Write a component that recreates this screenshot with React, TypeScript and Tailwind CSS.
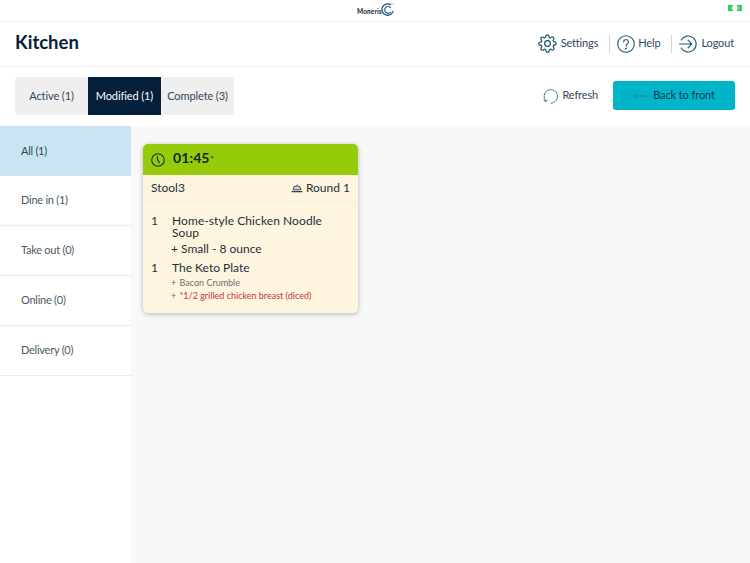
import React from "react";

const teal = "#1d5a73";

function Gear() {
  return (
    <svg width="19" height="19" viewBox="0 0 24 24" fill="none" stroke={teal} strokeWidth="1.6" strokeLinejoin="round" strokeLinecap="round">
      <circle cx="12" cy="12" r="3.6" />
      <path d="M19.4 15a1.65 1.65 0 0 0 .33 1.82l.06.06a2 2 0 1 1-2.83 2.83l-.06-.06a1.65 1.65 0 0 0-2.8 1.17V21a2 2 0 1 1-4 0v-.09a1.65 1.65 0 0 0-2.9-1.08l-.06.06a2 2 0 1 1-2.83-2.83l.06-.06a1.65 1.65 0 0 0-1.17-2.8H3a2 2 0 1 1 0-4h.09a1.65 1.65 0 0 0 1.08-2.9l-.06-.06a2 2 0 1 1 2.83-2.83l.06.06a1.65 1.65 0 0 0 2.8-1.17V3a2 2 0 1 1 4 0v.09a1.65 1.65 0 0 0 2.8 1.17l.06-.06a2 2 0 1 1 2.83 2.83l-.06.06a1.65 1.65 0 0 0 1.17 2.8H21a2 2 0 1 1 0 4h-.09a1.65 1.65 0 0 0-1.51 1z" />
    </svg>
  );
}

function HelpIcon() {
  return (
    <svg width="18" height="18" viewBox="0 0 18 18" fill="none" stroke={teal} strokeWidth="1.1" strokeLinecap="round">
      <circle cx="9" cy="9" r="8.3" />
      <path d="M6.6 7a2.4 2.4 0 1 1 3.7 2c-.9.6-1.3 1-1.3 2" />
      <circle cx="9" cy="13.4" r="0.4" />
    </svg>
  );
}

function LogoutIcon() {
  return (
    <svg width="18" height="18" viewBox="0 0 18 18" fill="none" stroke={teal} strokeWidth="1.1" strokeLinecap="round" strokeLinejoin="round">
      <path d="M2.2 5a8 8 0 1 1 0 8" />
      <path d="M0.5 9h12.3M9 5.2 12.8 9 9 12.8" />
    </svg>
  );
}

function RefreshIcon() {
  return (
    <svg width="16" height="16" viewBox="0 0 16 16" fill="none" stroke="#4d7f92" strokeWidth="1" strokeLinecap="round" strokeLinejoin="round">
      <path d="M2.6 12.8A6.8 6.8 0 1 1 8 15.2" />
      <path d="M0.8 11.8 2.6 13.8 4.6 12.2" />
    </svg>
  );
}

function Clock() {
  return (
    <svg width="14" height="14" viewBox="0 0 14 14" fill="none" stroke="#12303a" strokeWidth="1.1" strokeLinecap="round">
      <circle cx="7" cy="7" r="6.3" />
      <path d="M6.2 3.6 6.6 7l2 2.6" />
    </svg>
  );
}

function Cloche() {
  return (
    <svg width="12" height="10" viewBox="0 0 12 10" fill="none" stroke="#33414b" strokeWidth="0.9" strokeLinejoin="round">
      <path d="M2 6.8a4 4 0 0 1 8 0z" fill="#cfd2cf" />
      <path d="M5.4 2.2h1.2" />
      <path d="M0.6 8.6h10.8" strokeWidth="1.3" />
    </svg>
  );
}

function MonerisLogo() {
  return (
    <div className="flex items-start h-[16px] w-[36px]">
      <span className="text-[6.5px] font-black text-[#24344a] mt-[5px] leading-[8px] tracking-[0.1px]">Moneris</span>
      <svg width="14" height="14" viewBox="0 0 14 14" fill="none" className="-ml-[2px] shrink-0">
        <path d="M10.5 1.6A5.7 5.7 0 1 0 13 8.4" stroke="#24507a" strokeWidth="1.3" strokeLinecap="round" />
        <path d="M10.6 4.6A3.4 3.4 0 1 0 10.4 9.4" stroke="#2d5f86" strokeWidth="1.2" strokeLinecap="round" />
        <path d="M11.5 0.8 13.4 1.4" stroke="#9ab5c7" strokeWidth="0.8" strokeLinecap="round" />
      </svg>
    </div>
  );
}

function Expand() {
  return (
    <svg width="14" height="6" viewBox="0 0 14 6" fill="#2fd158">
      <path d="M0 0h5v1.4L3 3l2 1.6V6H0z" />
      <path d="M14 0H9v1.4L11 3 9 4.6V6h5z" />
    </svg>
  );
}

const tabs = [
  { label: "Active (1)", on: false },
  { label: "Modified (1)", on: true },
  { label: "Complete (3)", on: false },
];

const nav = ["All (1)", "Dine in (1)", "Take out (0)", "Online (0)", "Delivery (0)"];

export default function App() {
  return (
    <div
      className="w-[750px] h-[563px] overflow-hidden bg-white flex flex-col text-[#2c3e50]"
      style={{ fontFamily: "Lato, 'Noto Sans', sans-serif" }}
    >
      <div className="h-[21px] shrink-0 flex items-center justify-center relative">
        <MonerisLogo />
        <div className="absolute right-[8px] top-[5px] flex">
          <Expand />
        </div>
      </div>

      <header className="h-[46px] shrink-0 border-y border-[#f0f0f0] flex items-center justify-between pl-[15px] pr-[16px]">
        <h1 className="text-[18.5px] font-bold text-[#04203a] leading-none -mt-[4px]">Kitchen</h1>
        <div className="flex items-center text-[11px] tracking-[-0.15px] text-[#33475b] -mt-[1px]">
          <div className="flex items-center gap-[4px]">
            <Gear />
            <span>Settings</span>
          </div>
          <div className="w-px h-[18px] bg-[#d5d5d5] ml-[11px] mr-[7px]" />
          <div className="flex items-center gap-[3px]">
            <HelpIcon />
            <span>Help</span>
          </div>
          <div className="w-px h-[18px] bg-[#d5d5d5] ml-[11px] mr-[7px]" />
          <div className="flex items-center gap-[4px]">
            <LogoutIcon />
            <span>Logout</span>
          </div>
        </div>
      </header>

      <div className="h-[59px] shrink-0 flex items-start justify-between pl-[15px] pr-[15px] pt-[10px]">
        <div className="flex h-[38px] rounded-[3px] overflow-hidden bg-[#efefef]">
          {tabs.map((t) => (
            <div
              key={t.label}
              className={
                t.on
                  ? "w-[73px] flex items-center justify-center text-[11px] tracking-[-0.1px] bg-[#04203a] text-white"
                  : "w-[73px] flex items-center justify-center text-[11px] tracking-[-0.1px] text-[#33475b]"
              }
            >
              {t.label}
            </div>
          ))}
        </div>
        <div className="flex items-center mt-[4px]">
          <div className="flex items-center gap-[3px] text-[11px] tracking-[-0.15px] text-[#33475b] mr-[15px]">
            <RefreshIcon />
            <span>Refresh</span>
          </div>
          <div className="w-[122px] h-[29px] rounded-[3px] bg-[#00b5c9] flex items-center justify-center gap-[4px] text-[11px] tracking-[-0.1px] text-[#063a4c]">
            <svg width="16" height="8" viewBox="0 0 17 8" fill="none" stroke="#1c7a8a" strokeWidth="1">
              <path d="M16 4H1M4.5 0.8 1 4l3.5 3.2" />
            </svg>
            <span>Back to front</span>
          </div>
        </div>
      </div>

      <div className="flex-1 flex min-h-0">
        <aside className="w-[131px] shrink-0 bg-white">
          {nav.map((n, i) => (
            <div
              key={n}
              className={
                i === 0
                  ? "h-[50px] flex items-center pl-[21px] text-[11px] tracking-[-0.25px] bg-[#c8e5f1] text-[#33475b]"
                  : "h-[50px] flex items-center pl-[21px] text-[11px] tracking-[-0.25px] border-b border-[#ececec] text-[#4a5a68]"
              }
            >
              {n}
            </div>
          ))}
        </aside>

        <main className="flex-1 bg-[#f8f8f8] pl-[12px] pt-[18px]">
          <div className="w-[215px] h-[169px] rounded-[5px] bg-[#fef5df] shadow-[0_1px_5px_rgba(0,0,0,0.28)] overflow-hidden">
            <div className="h-[31px] bg-[#95cb0a] flex items-start pl-[8px] pt-[6px] gap-[8px]">
              <div className="mt-[3px]">
                <Clock />
              </div>
              <span className="text-[14px] font-bold text-[#12261f] leading-[15px] tracking-[0.1px]">
                01:45<span className="text-[7px] font-bold align-[1px] ml-[1px]">*</span>
              </span>
            </div>
            <div className="h-[26px] border-b border-[#f6efdc] flex items-center justify-between pl-[8px] pr-[8px] text-[12px] text-[#1f2f3d]">
              <span>Stool3</span>
              <span className="flex items-center gap-[3px]">
                <Cloche />
                Round 1
              </span>
            </div>
            <div className="pl-[8px] pr-[8px] pt-[14px] text-[#1f2f3d]">
              <div className="flex text-[12px] leading-[12px]">
                <span className="w-[21px] shrink-0">1</span>
                <span className="w-[165px] tracking-[0.08px]">Home-style Chicken Noodle Soup</span>
              </div>
              <div className="pl-[20px] mt-[3px] text-[12px] leading-[14px]">+ Small - 8 ounce</div>
              <div className="flex text-[12px] leading-[14px] mt-[5px]">
                <span className="w-[21px] shrink-0">1</span>
                <span>The Keto Plate</span>
              </div>
              <div className="pl-[20px] mt-[1px] text-[9px] leading-[13px] text-[#6b6f70]">
                + <span className="ml-[1px]">Bacon Crumble</span>
              </div>
              <div className="pl-[20px] text-[9px] leading-[13px] text-[#6b6f70]">
                + <span className="ml-[1px] text-[#c8323f]">*1/2 grilled chicken breast (diced)</span>
              </div>
            </div>
          </div>
        </main>
      </div>
    </div>
  );
}
